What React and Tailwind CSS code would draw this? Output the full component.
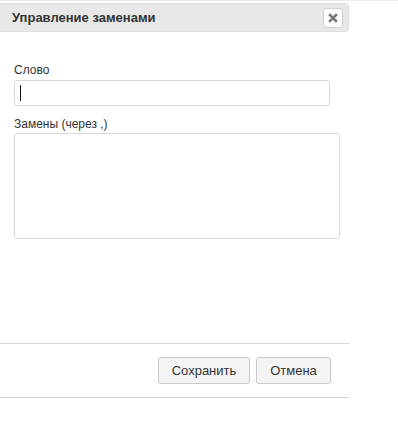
import React from "react";

export default function App() {
  return (
    <div className="w-[398px] h-[432px] bg-white" style={{ fontFamily: '"Liberation Sans", Arial, sans-serif' }}>
      <div className="h-px w-full bg-[#ececec]" />
      <div className="w-[349px]">
        <div className="mt-[2px] h-[29px] bg-[#e8e8e8] border border-l-0 border-[#e0e0e0] rounded-r-[4px] flex items-center justify-between pl-[12px] pr-[5px]">
          <span className="text-[13px] font-bold text-[#333]">Управление заменами</span>
          <div className="w-[20px] h-[20px] bg-white border border-[#cfcfcf] rounded-[3px] flex items-center justify-center">
            <svg width="10" height="10" viewBox="0 0 10 10">
              <path d="M2 2 L8 8 M8 2 L2 8" stroke="#7a7a7a" strokeWidth="2.6" strokeLinecap="square" />
            </svg>
          </div>
        </div>
        <div className="pl-[14px] pt-[30px] h-[311px]">
          <div className="text-[12px] leading-[16px] text-[#333]">Слово</div>
          <div className="mt-[2px] w-[316px] h-[26px] border border-[#d9d9d9] rounded-[3px] flex items-center pl-[5px]">
            <div className="w-px h-[16px] bg-[#111]" />
          </div>
          <div className="mt-[10px] text-[12px] leading-[16px] text-[#333]">Замены (через ,)</div>
          <div className="mt-[1px] w-[326px] h-[106px] border border-[#d9d9d9] rounded-[3px]" />
        </div>
        <div className="h-px bg-[#d6d6d6]" />
        <div className="h-[53px] flex items-center justify-end pr-[18px] gap-[6px]">
          <button className="h-[27px] w-[92px] bg-[#f4f4f4] border border-[#c8c8c8] rounded-[3px] text-[13px] text-[#333]">Сохранить</button>
          <button className="h-[27px] w-[75px] bg-[#f4f4f4] border border-[#c8c8c8] rounded-[3px] text-[13px] text-[#333]">Отмена</button>
        </div>
        <div className="h-px bg-[#d0d0d0]" />
      </div>
    </div>
  );
}
